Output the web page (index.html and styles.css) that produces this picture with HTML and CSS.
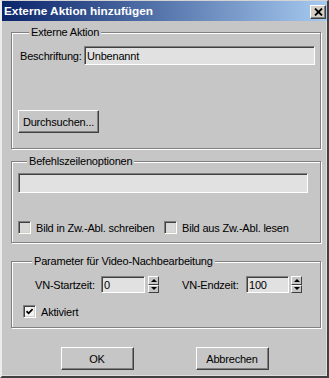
FILE: index.html
```html
<!DOCTYPE html>
<html lang="de">
<head>
    <meta charset="UTF-8">
    <title>Externe Aktion hinzufügen</title>
    <link rel="stylesheet" href="styles.css">
</head>
<body>

<div class="window">
    <div class="titlebar">
        <span class="title">Externe Aktion hinzufügen</span>
        <div class="close">
            <svg width="9" height="8" viewBox="0 0 9 8">
                <path d="M1 0.5L8 7.5M8 0.5L1 7.5" stroke="#000" stroke-width="1.8" fill="none"/>
            </svg>
        </div>
    </div>

    <div class="content">
        <fieldset class="group group-action">
            <legend>Externe Aktion</legend>
            <div class="row">
                <label class="caption-label">Beschriftung:</label>
                <input class="field caption-field" type="text" value="Unbenannt">
            </div>
            <button class="btn browse">Durchsuchen...</button>
        </fieldset>

        <fieldset class="group group-cmd">
            <legend>Befehlszeilenoptionen</legend>
            <input class="field cmd-field" type="text" value="">
            <div class="checks">
                <label class="check-item first"><span class="box"></span>Bild in Zw.-Abl. schreiben</label>
                <label class="check-item"><span class="box"></span>Bild aus Zw.-Abl. lesen</label>
            </div>
        </fieldset>

        <fieldset class="group group-video">
            <legend>Parameter für Video-Nachbearbeitung</legend>
            <div class="spin-row">
                <label class="start-label">VN-Startzeit:</label>
                <input class="field num start-field" type="text" value="0">
                <div class="spin">
                    <div class="spin-btn"><span class="arrow-up"></span></div>
                    <div class="spin-btn"><span class="arrow-down"></span></div>
                </div>
                <label class="end-label">VN-Endzeit:</label>
                <input class="field num end-field" type="text" value="100">
                <div class="spin end-spin">
                    <div class="spin-btn"><span class="arrow-up"></span></div>
                    <div class="spin-btn"><span class="arrow-down"></span></div>
                </div>
            </div>
            <label class="check-item active">
                <span class="box checked">
                    <svg width="7" height="7" viewBox="0 0 7 7">
                        <path d="M0.5 3.2L2.6 5.3L6.6 1.2" stroke="#000" stroke-width="1.8" fill="none"/>
                    </svg>
                </span>Aktiviert
            </label>
        </fieldset>
    </div>

    <div class="footer">
        <button class="btn dialog-btn">OK</button>
        <button class="btn dialog-btn">Abbrechen</button>
    </div>
</div>

</body>
</html>
```

FILE: styles.css
```css
body {
    margin: 0;
    background-color: #c6c6c6;
    font-family: "Liberation Sans", Arial, sans-serif;
    font-size: 11px;
    letter-spacing: -0.2px;
    color: #000;
}

.window {
    width: 329px;
    height: 378px;
    box-sizing: border-box;
    background-color: #c6c6c6;
    border-style: solid;
    border-width: 1px 2px 2px 2px;
    border-color: #d4d4d4 #404040 #404040 #ececec;
    box-shadow: inset -1px -1px #dedede;
    display: flex;
    flex-direction: column;
}

.titlebar {
    height: 20px;
    display: flex;
    align-items: center;
    justify-content: space-between;
    padding: 0 1px 0 2px;
    background: linear-gradient(to right, #0a246a, #a6caf0);
}

.title {
    color: white;
    font-weight: bold;
    font-size: 11.8px;
    letter-spacing: 0;
}

.close {
    width: 16px;
    height: 14px;
    box-sizing: border-box;
    margin-top: 2px;
    background-color: #d4d0c8;
    border: 1px solid;
    border-color: #fff #404040 #404040 #fff;
    box-shadow: inset -1px -1px #808080;
    display: flex;
    align-items: center;
    justify-content: center;
}

.content {
    padding: 5px 0 0 9px;
}

.group {
    margin: 0;
    width: 310px;
    min-width: 0;
    box-sizing: border-box;
    border: 1px solid #808080;
    box-shadow: inset 1px 1px #fff, 1px 1px #fff;
}

.group legend {
    margin-left: 9px;
    padding: 0 2px;
    line-height: 13px;
    background-color: #c6c6c6;
}

.group-action {
    padding: 7px 5px 15px 8px;
}

.group-cmd {
    margin-top: 6px;
    padding: 5px 0 8px 6px;
}

.group-video {
    margin-top: 12px;
    padding: 8px 0 9px 11px;
}

.row {
    display: flex;
    align-items: center;
}

.caption-label {
    width: 64px;
    flex-shrink: 0;
}

.field {
    box-sizing: border-box;
    margin: 0;
    padding: 0 2px;
    border: 1px solid;
    border-color: #808080 #fff #fff #808080;
    box-shadow: inset 1px 1px #404040;
    background-color: #e1e1e1;
    font: inherit;
    letter-spacing: inherit;
    color: #000;
    outline: none;
}

.caption-field {
    flex: 1;
    height: 19px;
    min-width: 0;
}

.btn {
    box-sizing: border-box;
    height: 23px;
    padding: 0;
    background-color: #c6c6c6;
    border: 1px solid;
    border-color: #fff #404040 #404040 #fff;
    box-shadow: inset -1px -1px #808080;
    font: inherit;
    letter-spacing: inherit;
    color: #000;
}

.browse {
    display: block;
    width: 81px;
    margin: 45px 0 0 -2px;
}

.cmd-field {
    display: block;
    width: 290px;
    height: 20px;
}

.checks {
    display: flex;
    margin-top: 28px;
}

.check-item {
    display: flex;
    align-items: center;
    height: 13px;
}

.check-item.first {
    width: 146px;
}

.box {
    width: 13px;
    height: 13px;
    box-sizing: border-box;
    margin-right: 5px;
    border: 1px solid;
    border-color: #808080 #fff #fff #808080;
    box-shadow: inset 1px 1px #404040, inset -1px -1px #d4d0c8;
    background-color: #d8d8d8;
    display: flex;
    align-items: center;
    justify-content: center;
}

.box.checked {
    background-color: #f2f2f2;
}

.spin-row {
    display: flex;
    align-items: center;
    height: 17px;
    margin-left: 12px;
}

.start-label {
    width: 66px;
}

.end-label {
    width: 64px;
    margin-left: 23px;
}

.num {
    height: 17px;
}

.start-field {
    width: 44px;
}

.end-field {
    width: 43px;
}

.spin {
    width: 11px;
    height: 17px;
    margin-left: 3px;
    display: flex;
    flex-direction: column;
}

.end-spin {
    margin-left: 2px;
}

.spin-btn {
    flex: 1;
    box-sizing: border-box;
    border: 1px solid;
    border-color: #fff #404040 #404040 #fff;
    background-color: #c6c6c6;
    display: flex;
    align-items: center;
    justify-content: center;
}

.arrow-up {
    width: 0;
    height: 0;
    border-left: 3px solid transparent;
    border-right: 3px solid transparent;
    border-bottom: 3px solid #000;
}

.arrow-down {
    width: 0;
    height: 0;
    border-left: 3px solid transparent;
    border-right: 3px solid transparent;
    border-top: 3px solid #000;
}

.check-item.active {
    margin-top: 12px;
}

.footer {
    display: flex;
    justify-content: center;
    gap: 62px;
    margin-top: 19px;
}

.dialog-btn {
    width: 73px;
}
```
